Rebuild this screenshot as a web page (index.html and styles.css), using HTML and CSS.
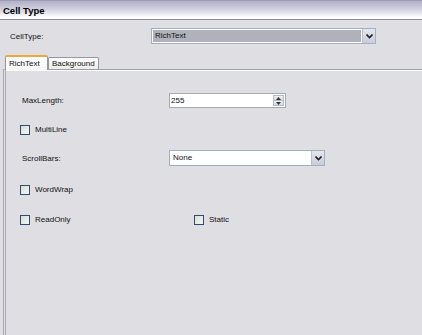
FILE: index.html
```html
<!DOCTYPE html>
<html>
<head>
<meta charset="utf-8">
<link rel="stylesheet" href="styles.css">
</head>
<body>
<div class="title">Cell Type</div>
<div class="top-row">
  <span class="top-label">CellType:</span>
  <div class="combo combo-main">
    <div class="combo-text">RichText</div>
    <div class="combo-btn"><svg width="7" height="5" viewBox="0 0 7 5"><path d="M0.5 0.5 L3.5 3.5 L6.5 0.5" fill="none" stroke="#222" stroke-width="1.6"/></svg></div>
  </div>
</div>
<div class="tabs">
  <div class="tab active">RichText</div>
  <div class="tab">Background</div>
</div>
<div class="pane">
  <div class="row r-max">
    <span class="lbl">MaxLength:</span>
    <div class="spin">
      <div class="spin-text">255</div>
      <div class="spin-btns">
        <div class="sb"><svg width="5" height="3" viewBox="0 0 5 3"><path d="M0 3 L2.5 0 L5 3 Z" fill="#333"/></svg></div>
        <div class="sb"><svg width="5" height="3" viewBox="0 0 5 3"><path d="M0 0 L2.5 3 L5 0 Z" fill="#333"/></svg></div>
      </div>
    </div>
  </div>
  <div class="row r-multi"><span class="cb"></span><span class="cbl">MultiLine</span></div>
  <div class="row r-scroll">
    <span class="lbl">ScrollBars:</span>
    <div class="combo combo-scroll">
      <div class="combo-text white">None</div>
      <div class="combo-btn"><svg width="7" height="5" viewBox="0 0 7 5"><path d="M0.5 0.5 L3.5 3.5 L6.5 0.5" fill="none" stroke="#222" stroke-width="1.6"/></svg></div>
    </div>
  </div>
  <div class="row r-wrap"><span class="cb"></span><span class="cbl">WordWrap</span></div>
  <div class="row r-ro">
    <div class="cbgroup"><span class="cb"></span><span class="cbl">ReadOnly</span></div>
    <div class="cbgroup"><span class="cb"></span><span class="cbl">Static</span></div>
  </div>
</div>
</body>
</html>
```

FILE: styles.css
```css
html, body {
  margin: 0;
  padding: 0;
  background: #dfdee3;
  font-family: "Liberation Sans", Arial, sans-serif;
  font-size: 8px;
  color: #111;
  overflow: hidden;
  height: 335px;
}
.title {
  height: 18px;
  border-top: 1px solid #9e9cb4;
  border-bottom: 1px solid #8d8aa3;
  background: linear-gradient(#b3b1c8, #d8d7e4 55%, #ffffff 90%, #ffffff);
  font-weight: bold;
  font-size: 9.5px;
  line-height: 19px;
  padding-left: 3px;
  color: #000;
}
.top-row {
  display: flex;
  align-items: center;
  margin-top: 8px;
  height: 16px;
  padding-left: 10px;
}
.top-label { width: 141px; }
.combo {
  display: flex;
  height: 14px;
  border: 1px solid #a3afc2;
  background: #fff;
}
.combo-main { width: 223px; }
.combo-text {
  flex: 1;
  margin: 1px;
  background: #b0b1ba;
  line-height: 12px;
  padding-left: 2px;
}
.combo-text.white { background: #fff; }
.combo-btn {
  width: 12px;
  display: flex;
  align-items: center;
  justify-content: center;
  background: linear-gradient(#e4e6ef, #c9cdda);
  border-left: 1px solid #b9c2d3;
}
.tabs {
  display: flex;
  align-items: flex-end;
  margin-top: 11px;
  padding-left: 5px;
  height: 14px;
  position: relative;
  z-index: 1;
}
.tab {
  height: 11px;
  line-height: 11px;
  padding: 0 3px;
  border: 1px solid #9198a4;
  border-bottom: none;
  background: linear-gradient(#ffffff, #ecebe6);
  border-radius: 2px 2px 0 0;
}
.tab.active {
  height: 13px;
  line-height: 13px;
  border-top: 2px solid #f0a63a;
  background: linear-gradient(#ffffff, #f7f7f5);
  width: 35px;
  padding: 0 3px;
  margin-bottom: -1px;
}
.pane {
  margin-left: 3px;
  border-left: 3px double #a9aab3;
  border-top: 1px solid #96a0ab;
  box-shadow: inset 0 1px 0 #fdfdfd;
  height: 270px;
}
.row {
  display: flex;
  align-items: center;
}
.lbl { padding-left: 16px; width: 147px; }
.r-max { margin-top: 23px; height: 15px; }
.spin {
  display: flex;
  width: 115px;
  height: 13px;
  border: 1px solid #a4abb5;
  background: #fff;
}
.spin-text { flex: 1; padding-left: 1px; line-height: 13px; }
.spin-btns {
  width: 11px;
  display: flex;
  flex-direction: column;
  margin: 1px 1px 1px 0;
}
.sb {
  flex: 1;
  display: flex;
  align-items: center;
  justify-content: center;
  background: linear-gradient(#eef0f6, #d3d7e2);
  border: 1px solid #b4bccb;
}
.sb + .sb { border-top: none; }
.cb {
  display: inline-block;
  width: 8px;
  height: 8px;
  border: 1px solid #2a4e74;
  background: linear-gradient(135deg, #dcdcd6, #f6f6f4);
  margin-left: 14px;
  flex: none;
}
.cbl { margin-left: 5px; }
.r-multi { margin-top: 16px; height: 11px; }
.r-scroll { margin-top: 15px; height: 16px; }
.combo-scroll { width: 154px; }
.r-wrap { margin-top: 18px; height: 11px; }
.r-ro { margin-top: 19px; height: 11px; }
.cbgroup { display: flex; align-items: center; width: 174px; }
```
